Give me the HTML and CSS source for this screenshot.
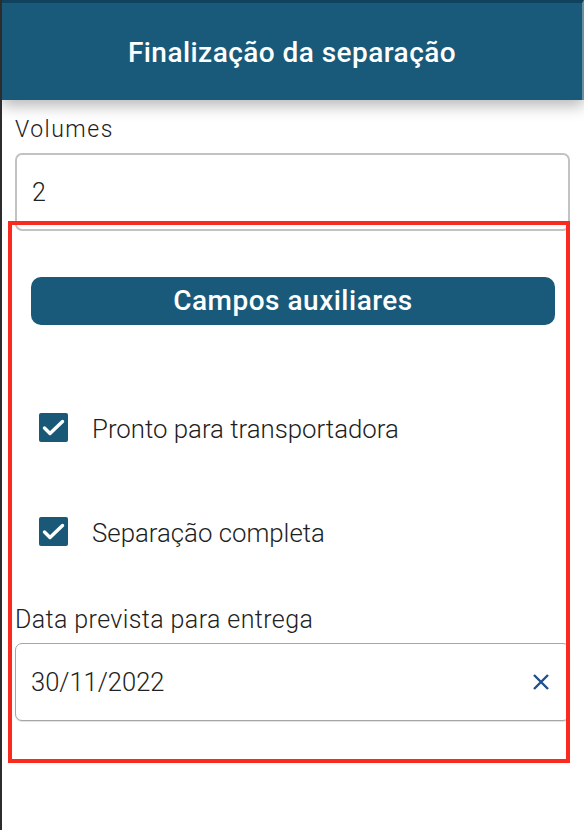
FILE: index.html
```html
<!DOCTYPE html>
<html lang="pt-BR">
<head>
<meta charset="utf-8">
<title>Finalização da separação</title>
<link rel="stylesheet" href="styles.css">
</head>
<body>
<div class="screen">
  <header class="topbar">
    <h1 class="title">Finalização da separação</h1>
  </header>
  <main class="content">
    <label class="field-label volumes-label">Volumes</label>
    <div class="input input-light"><span class="input-text">2</span></div>
    <section class="aux">
      <div class="aux-button">Campos auxiliares</div>
      <div class="checks">
        <div class="check-row">
          <span class="checkbox">
            <svg viewBox="0 0 29 29" width="29" height="29"><path d="M5.5 15 L11 20.5 L23.5 8.5" fill="none" stroke="#fff" stroke-width="3.4" stroke-linecap="round" stroke-linejoin="round"/></svg>
          </span>
          <span class="check-label">Pronto para transportadora</span>
        </div>
        <div class="check-row">
          <span class="checkbox">
            <svg viewBox="0 0 29 29" width="29" height="29"><path d="M5.5 15 L11 20.5 L23.5 8.5" fill="none" stroke="#fff" stroke-width="3.4" stroke-linecap="round" stroke-linejoin="round"/></svg>
          </span>
          <span class="check-label">Separação completa</span>
        </div>
      </div>
      <label class="field-label date-label">Data prevista para entrega</label>
      <div class="input input-dark">
        <span class="input-text date-text">30/11/2022</span>
        <svg class="clear-icon" viewBox="0 0 18 18" width="18" height="18"><path d="M2 2L16 16M16 2L2 16" fill="none" stroke="#1f4f8e" stroke-width="2.4"/></svg>
      </div>
    </section>
  </main>
</div>
</body>
</html>
```
FILE: styles.css
```css
* { box-sizing: border-box; }

html, body {
  margin: 0;
  padding: 0;
  background: #ffffff;
}

body {
  font-family: Roboto, "Noto Sans", "Liberation Sans", sans-serif;
  color: #212121;
}

.screen {
  width: 584px;
  height: 830px;
  border-left: 2px solid #2c2c2c;
  overflow: hidden;
}

.topbar {
  height: 100px;
  border-top: 3px solid #0f425c;
  border-right: 2px solid #6a90a3;
  background: #195a7a;
  box-shadow: 0 6px 14px rgba(0, 0, 0, 0.28);
  display: flex;
  align-items: center;
  justify-content: center;
  position: relative;
  z-index: 1;
}

.title {
  margin: 0;
  font-size: 28px;
  font-weight: 500;
  color: #ffffff;
  letter-spacing: 0.45px;
  padding-top: 2px;
}

.content {
  padding: 0 14px 0 13px;
}

.field-label {
  display: block;
  font-weight: 300;
  line-height: 26px;
  color: #222;
}

.volumes-label {
  font-size: 23px;
  letter-spacing: 1.5px;
  margin-top: 17px;
}

.input {
  margin-top: 10px;
  height: 78px;
  border-radius: 7px;
  display: flex;
  align-items: center;
  padding: 0 14px 0 15px;
  background: #fff;
}

.input-light {
  border: 2px solid #c2c2c2;
}

.input-dark {
  border: 1.5px solid #a6a6a6;
  box-shadow: 0 1px 1px rgba(0, 0, 0, 0.12);
  justify-content: space-between;
  padding-right: 19px;
}

.input-text {
  font-size: 25px;
  font-weight: 300;
  color: #222;
}

.date-text {
  font-size: 25.5px;
}

.aux {
  position: relative;
  padding-top: 46px;
  padding-bottom: 42px;
}

.aux::after {
  content: "";
  position: absolute;
  top: -10px;
  left: -7px;
  right: 0;
  bottom: 0;
  border: 4px solid #fb2a1f;
  pointer-events: none;
  z-index: 2;
}

.aux-button {
  margin: 0 15px 0 16px;
  height: 48px;
  border-radius: 10px;
  background: #195a7a;
  color: #fff;
  font-size: 28px;
  font-weight: 500;
  letter-spacing: 0.5px;
  display: flex;
  align-items: center;
  justify-content: center;
  padding-bottom: 2px;
}

.checks {
  display: flex;
  flex-direction: column;
  gap: 44px;
  margin-top: 72px;
}

.check-row {
  height: 60px;
  display: flex;
  align-items: center;
  padding-left: 24px;
}

.checkbox {
  width: 29px;
  height: 29px;
  border-radius: 2px;
  background: #1a5878;
  display: flex;
  align-items: center;
  justify-content: center;
  flex: none;
}

.check-label {
  margin-left: 24px;
  font-size: 25.8px;
  font-weight: 300;
  line-height: 30px;
  color: #1e1e1e;
  padding-top: 3px;
}

.date-label {
  font-size: 25px;
  letter-spacing: 0.4px;
  margin-top: 46px;
}

.clear-icon {
  flex: none;
}
```
